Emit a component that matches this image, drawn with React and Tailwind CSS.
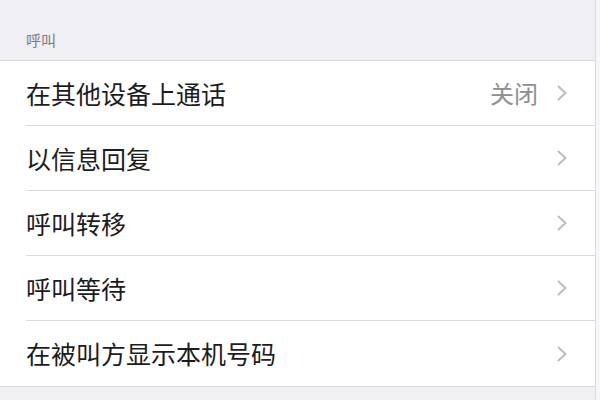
import React from 'react';

const rows = [
  { label: '在其他设备上通话', value: '关闭' },
  { label: '以信息回复' },
  { label: '呼叫转移' },
  { label: '呼叫等待' },
  { label: '在被叫方显示本机号码' },
];

const font = { fontFamily: '"Noto Sans CJK SC", "Noto Sans", sans-serif' };

function Chevron() {
  return (
    <svg width="12" height="16" viewBox="0 0 12 16" fill="none" className="shrink-0">
      <path d="M2.5 1.5 L9.5 8 L2.5 14.5" stroke="#bdbdc2" strokeWidth="2" strokeLinecap="round" strokeLinejoin="round" />
    </svg>
  );
}

export default function App() {
  return (
    <div className="flex w-[600px] h-[400px] overflow-hidden bg-white" style={font}>
      <div className="flex-1 flex flex-col bg-[#efeff4]">
        <div className="h-[61px] border-b border-[#d8d8dc] flex items-end px-[26px] pb-[13px]">
          <span className="text-[15px] leading-none text-[#7c7c80]">呼叫</span>
        </div>
        <div className="bg-white border-b border-[#d8d8dc]">
          {rows.map((r, i) => (
            <div key={i} className="pl-[26px]">
              <div
                className={
                  'h-[65px] flex items-center pr-[27px] ' +
                  (i < rows.length - 1 ? 'border-b border-[#dcdcdf]' : '')
                }
              >
                <span className="flex-1 text-[25px] leading-none text-[#1c1c1e]">{r.label}</span>
                {r.value && (
                  <span className="text-[24px] leading-none text-[#8e8e93] mr-[18px]">{r.value}</span>
                )}
                <Chevron />
              </div>
            </div>
          ))}
        </div>
        <div className="flex-1" />
      </div>
      <div className="w-px bg-[#dcdcdf]" />
      <div className="w-[4px] bg-[#f7f7f9]" />
    </div>
  );
}
